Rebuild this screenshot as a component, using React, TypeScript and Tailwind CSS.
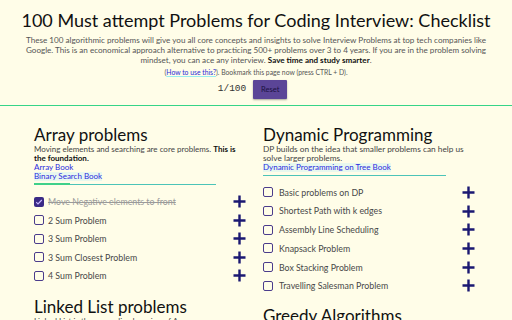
import React from 'react';

const font = { fontFamily: 'Lato, "Open Sans", sans-serif' };

type Item = { name: string; done?: boolean };

const arrayItems: Item[] = [
  { name: 'Move Negative elements to front', done: true },
  { name: '2 Sum Problem' },
  { name: '3 Sum Problem' },
  { name: '3 Sum Closest Problem' },
  { name: '4 Sum Problem' },
];

const dpItems: Item[] = [
  { name: 'Basic problems on DP' },
  { name: 'Shortest Path with k edges' },
  { name: 'Assembly Line Scheduling' },
  { name: 'Knapsack Problem' },
  { name: 'Box Stacking Problem' },
  { name: 'Travelling Salesman Problem' },
];

const PlusIcon = () => (
  <svg width="13" height="13" viewBox="0 0 13 13" className="text-[#1b1872]">
    <path d="M6.5 0.5v12M0.5 6.5h12" stroke="currentColor" strokeWidth="2.4" />
  </svg>
);

const Row = ({ item, h, gap }: { item: Item; h: string; gap: string }) => (
  <div className={`flex items-center justify-between ${h}`}>
    <div className={`flex items-center ${gap}`}>
      {item.done ? (
        <div className="w-[10px] h-[10px] rounded-[2px] bg-[#3a2a86] flex items-center justify-center">
          <svg width="8" height="8" viewBox="0 0 8 8">
            <path d="M1.2 4.2l1.8 1.8 3.8-4" stroke="#c8b8ff" strokeWidth="1.1" fill="none" />
          </svg>
        </div>
      ) : (
        <div className="w-[10px] h-[10px] rounded-[2px] border-[1.5px] border-[#4b3c8c]" />
      )}
      <span
        className={`text-[8.8px] ${item.done ? 'text-[#9a9a9a] line-through' : 'text-[#484848]'}`}
      >
        {item.name}
      </span>
    </div>
    <PlusIcon />
  </div>
);

export default function App() {
  return (
    <div className="w-[512px] h-[320px] overflow-hidden bg-[#fffde8] text-black" style={font}>
      <div className="flex flex-col items-center pt-[6px]">
        <h1 className="text-[18px] leading-[28px] text-[#111] whitespace-nowrap">
          100 Must attempt Problems for Coding Interview: Checklist
        </h1>
        <p className="text-[8.1px] leading-[10px] text-[#555] text-center px-[14px] mt-[1px]">
          These 100 algorithmic problems will give you all core concepts and insights to solve Interview Problems at top tech companies like Google. This is an economical approach alternative to practicing 500+ problems over 3 to 4 years. If you are in the problem solving mindset, you can ace any interview. <b className="text-[#111]">Save time and study smarter</b>.
        </p>
        <p className="text-[6.8px] leading-[9px] text-[#555] mt-[3px]">
          (<span className="text-[#2a2ad8] underline decoration-[#9ee]">How to use this?</span>). Bookmark this page now (press CTRL + D).
        </p>
        <div className="flex items-center gap-[7px] mt-[3px] mr-[7px]">
          <span className="text-[9.5px] text-[#333]" style={{ fontFamily: '"Liberation Mono", monospace' }}>
            1/100
          </span>
          <button className="w-[34px] h-[19px] bg-[#5b4597] text-[#1a1040] text-[7.5px] rounded-[1px] shadow-[0_1px_2px_rgba(0,0,0,0.35)]">
            Reset
          </button>
        </div>
      </div>
      <div className="h-[1px] bg-[#36d488] mt-[6px]" />

      <div className="grid grid-cols-2 gap-[17px] pl-[34px] pr-[37px] pt-[19px]">
        <div>
          <h2 className="text-[17px] leading-[20px] text-[#111]">Array problems</h2>
          <p className="text-[8px] leading-[9px] text-[#444]">
            Moving elements and searching are core problems. <b className="text-[#111]">This is the foundation.</b>
          </p>
          <p className="text-[8px] leading-[9px] text-[#2a2ae0]">Array Book</p>
          <p className="text-[8px] leading-[9px] text-[#2a2ae0] w-fit bg-[#e8f8ee]">Binary Search Book</p>
          <div className="relative mt-[2px] w-[182px] h-[2px]">
            <div className="absolute left-0 right-0 top-[1px] h-[1px] bg-[#4cc4b8]" />
            <div className="absolute left-0 top-0 w-[36px] h-[2px] bg-[#3fd18a]" />
          </div>
          <div className="mt-[7.5px]">
            {arrayItems.map((it, i) => (
              <Row key={i} item={it} h="h-[18.5px]" gap="gap-[4px]" />
            ))}
          </div>
          <h2 className="text-[17px] leading-[20px] text-[#111] mt-[12px]">Linked List problems</h2>
          <p className="text-[8px] leading-[9px] text-[#444]">Linked List is the generalized version of Array</p>
        </div>
        <div>
          <h2 className="text-[17px] leading-[20px] text-[#111]">Dynamic Programming</h2>
          <p className="text-[8.3px] leading-[9px] text-[#444] w-[205px]">
            DP builds on the idea that smaller problems can help us solve larger problems.
          </p>
          <p className="text-[8px] leading-[9px] text-[#2a2ae0] w-fit bg-[#e8f8ee]">Dynamic Programming on Tree Book</p>
          <div className="mt-[3px] w-[183px] h-[1px] bg-[#4cc4b8]" />
          <div className="mt-[7px]">
            {dpItems.map((it, i) => (
              <Row key={i} item={it} h="h-[18.7px]" gap="gap-[6px]" />
            ))}
          </div>
          <h2 className="text-[17px] leading-[20px] text-[#111] mt-[11px]">Greedy Algorithms</h2>
        </div>
      </div>
    </div>
  );
}
